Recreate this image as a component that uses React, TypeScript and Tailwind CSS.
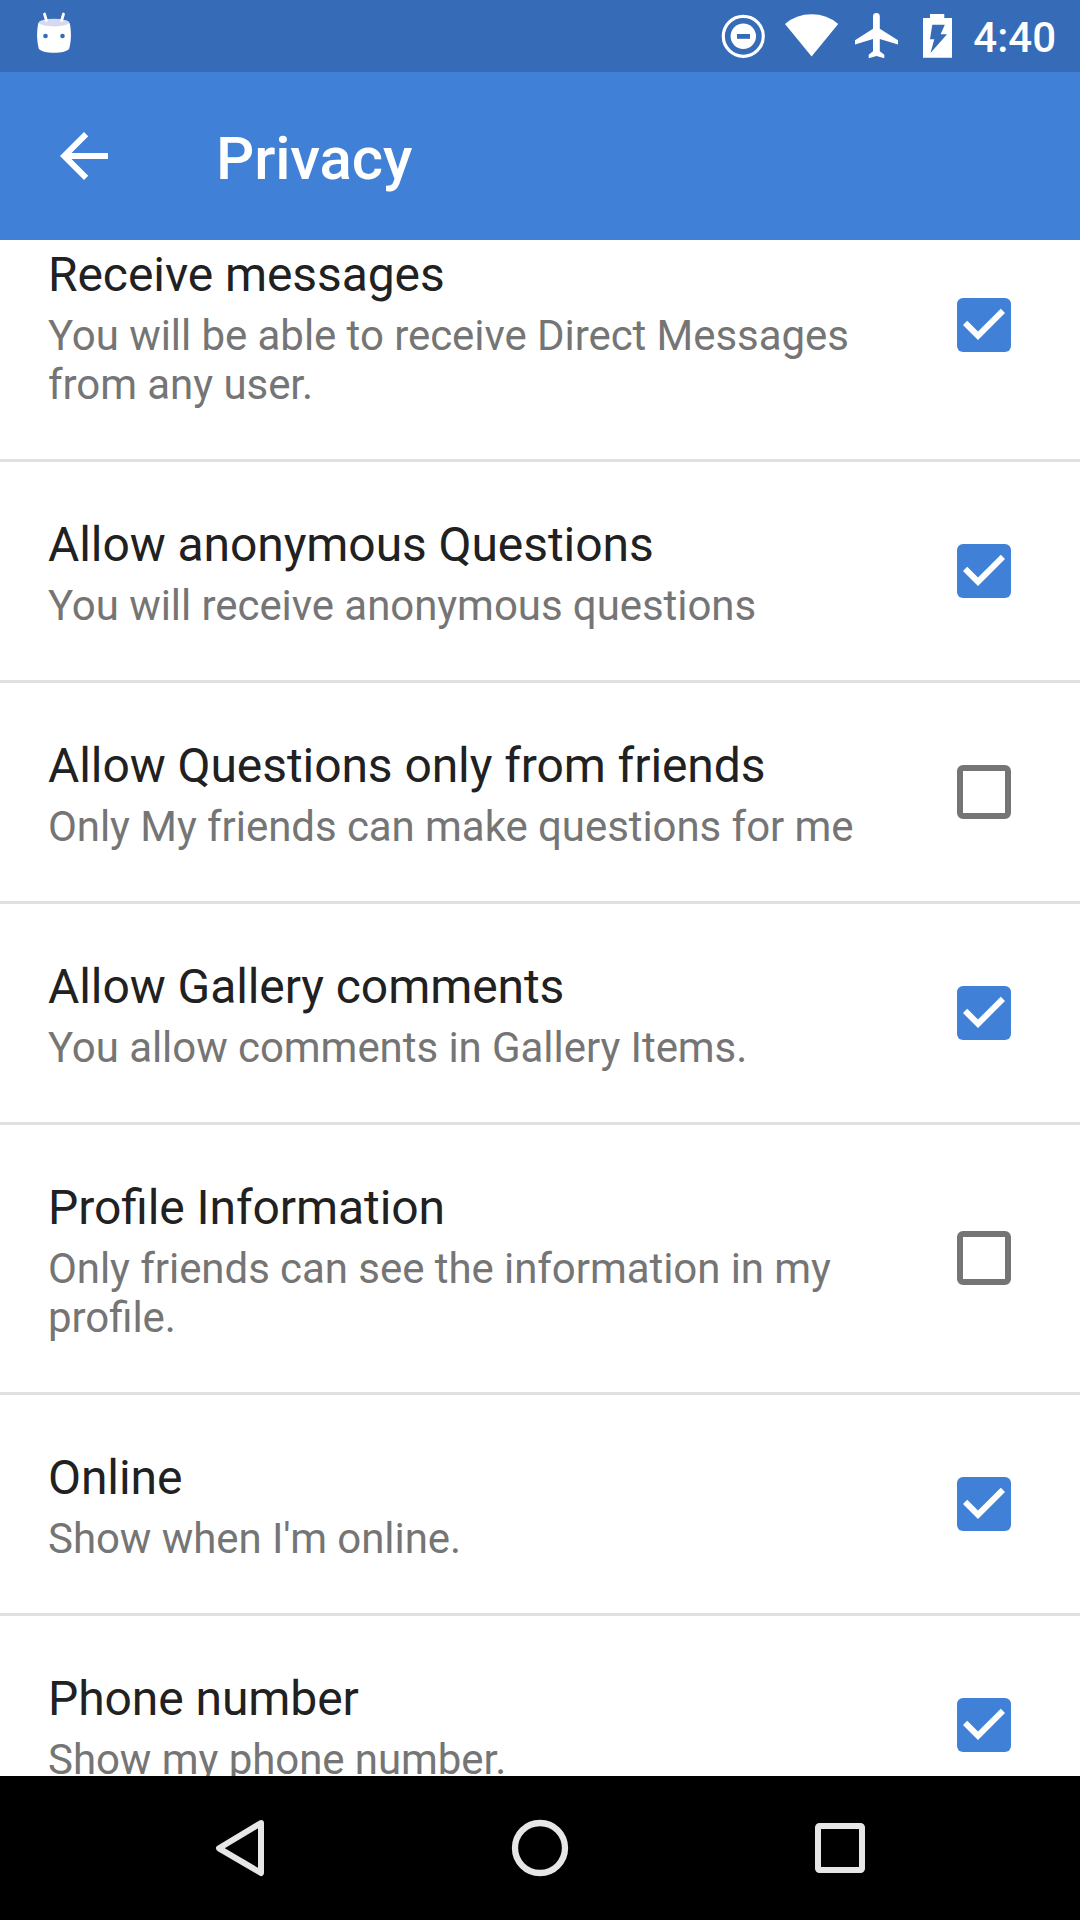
import React from "react";

type Setting = { title: string; summary: string; checked: boolean };

const settings: Setting[] = [
  { title: "Receive messages", summary: "You will be able to receive Direct Messages from any user.", checked: true },
  { title: "Allow anonymous Questions", summary: "You will receive anonymous questions", checked: true },
  { title: "Allow Questions only from friends", summary: "Only My friends can make questions for me", checked: false },
  { title: "Allow Gallery comments", summary: "You allow comments in Gallery Items.", checked: true },
  { title: "Profile Information", summary: "Only friends can see the information in my profile.", checked: false },
  { title: "Online", summary: "Show when I'm online.", checked: true },
  { title: "Phone number", summary: "Show my phone number.", checked: true },
];

function StatusBar() {
  return (
    <div className="flex h-[72px] shrink-0 items-start bg-[#356bb7] text-white">
      <svg className="ml-[36px] mt-[12px] h-[42px] w-[36px]" viewBox="36 12 36 42">
        <path d="M38.3 23C36.6 31 36.6 41 38.8 48.5C41 54.2 67 54.2 69.2 48.5C71.4 41 71.4 31 69.7 23Z" fill="white" />
        <ellipse cx="54" cy="22.6" rx="15.4" ry="3.8" fill="#d4d9ef" />
        <path d="M44.5 14l1.9 6.5M63.5 14l-1.9 6.5" stroke="white" strokeWidth="2.8" strokeLinecap="round" />
        <circle cx="45.5" cy="36" r="2.3" fill="#356bb7" />
        <circle cx="62.5" cy="36" r="2.3" fill="#356bb7" />
      </svg>
      <svg className="ml-auto mt-[14px] h-[44px] w-[44px]" viewBox="721 14 44 44">
        <circle cx="743.3" cy="36.3" r="20" fill="none" stroke="white" strokeWidth="3.2" />
        <circle cx="743.3" cy="36.3" r="12.7" fill="white" />
        <path d="M737 34h13v4.8h-13z" fill="#356bb7" />
      </svg>
      <svg className="ml-[19px] mt-[12px] h-[46px] w-[56px]" viewBox="784 12 56 46">
        <path d="M785 24Q796 14.3 811.6 14.3T838.2 24L811.6 56.5Z" fill="white" />
      </svg>
      <svg className="ml-[14px] mt-[12px] h-[48px] w-[46px]" viewBox="854 12 46 48">
        <path d="M898 44.6v-4.4l-18.2-11.5V16.4a3.4 3.4 0 0 0-6.8 0v12.3L855 40.2v4.4l18-5.6v12.3l-4.3 3.4v3.6l7.8-2.3 7.8 2.3v-3.6l-4.5-3.4V39z" fill="white" />
      </svg>
      <svg className="ml-[22px] mt-[14px] h-[44px] w-[30px]" viewBox="922 14 30 44">
        <path d="M930 14h14.3v4h7.7v39.7h-29V18h7z" fill="white" />
        <path d="M932.3 24.8H944.8L940.6 34.2H947L930.5 53L934.3 39.2H930z" fill="#356bb7" />
      </svg>
      <span className="ml-[21px] mr-[24px] mt-[13px] text-[42px] leading-[49px] font-medium">4:40</span>
    </div>
  );
}

function Toolbar() {
  return (
    <header className="flex h-[168px] shrink-0 items-center bg-[#4080d7] pl-[48px] text-white">
      <svg className="size-[72px]" viewBox="0 0 24 24" fill="currentColor">
        <path d="M20 11H7.83l5.59-5.59L12 4l-8 8 8 8 1.41-1.41L7.83 13H20z" />
      </svg>
      <h1 className="mt-[6px] ml-[96px] text-[60px] leading-[70px] font-medium tracking-[-0.15px]">Privacy</h1>
    </header>
  );
}

function Checkbox({ checked }: { checked: boolean }) {
  if (!checked) {
    return <span className="mb-[0.5px] size-[54px] rounded-[6px] border-[6px] border-[#757575]" />;
  }
  return (
    <svg className="mb-[0.5px] size-[54px] rounded-[6px] bg-[#4080d7]" viewBox="3 3 18 18">
      <path d="M10 17l-5-5 1.41-1.41L10 14.17l7.59-7.59L19 8z" fill="white" />
    </svg>
  );
}

function SettingRow({ title, summary, checked }: Setting) {
  return (
    <li className="flex shrink-0 items-center justify-between border-b-[3px] border-[#e0e0e0] pr-[69px] pl-[48px]">
      <div className="w-[816px] pt-[55px] pb-[50px] [font-feature-settings:'liga'_1]">
        <h2 className="text-[48px] leading-[56px] tracking-[-0.08px] text-[#212121]">{title}</h2>
        <p className="mt-2 text-[42px] leading-[49px] tracking-[-0.06px] text-[#757575]">{summary}</p>
      </div>
      <Checkbox checked={checked} />
    </li>
  );
}

function NavigationBar() {
  return (
    <nav className="flex h-[144px] shrink-0 items-center justify-center gap-[228px] bg-black">
      <svg className="size-[72px]" viewBox="204 1812 72 72" fill="none">
        <path d="M261 1823L219 1848.3L261 1873Z" stroke="#e6e6e6" strokeWidth="6" strokeLinejoin="round" />
      </svg>
      <svg className="size-[72px]" viewBox="0 0 72 72" fill="none">
        <circle cx="36" cy="36" r="25" stroke="#e6e6e6" strokeWidth="6.3" />
      </svg>
      <svg className="size-[72px]" viewBox="0 0 72 72" fill="none">
        <rect x="14" y="14" width="44" height="44" rx="1.5" stroke="#e6e6e6" strokeWidth="6" />
      </svg>
    </nav>
  );
}

export default function App() {
  return (
    <div className="flex h-[1920px] w-[1080px] flex-col overflow-hidden bg-white font-['Roboto',sans-serif]">
      <StatusBar />
      <Toolbar />
      <main className="min-h-0 flex-1 overflow-hidden">
        <ul className="-mt-[48px] flex flex-col">
          {settings.map((s) => (
            <SettingRow key={s.title} {...s} />
          ))}
        </ul>
      </main>
      <NavigationBar />
    </div>
  );
}
